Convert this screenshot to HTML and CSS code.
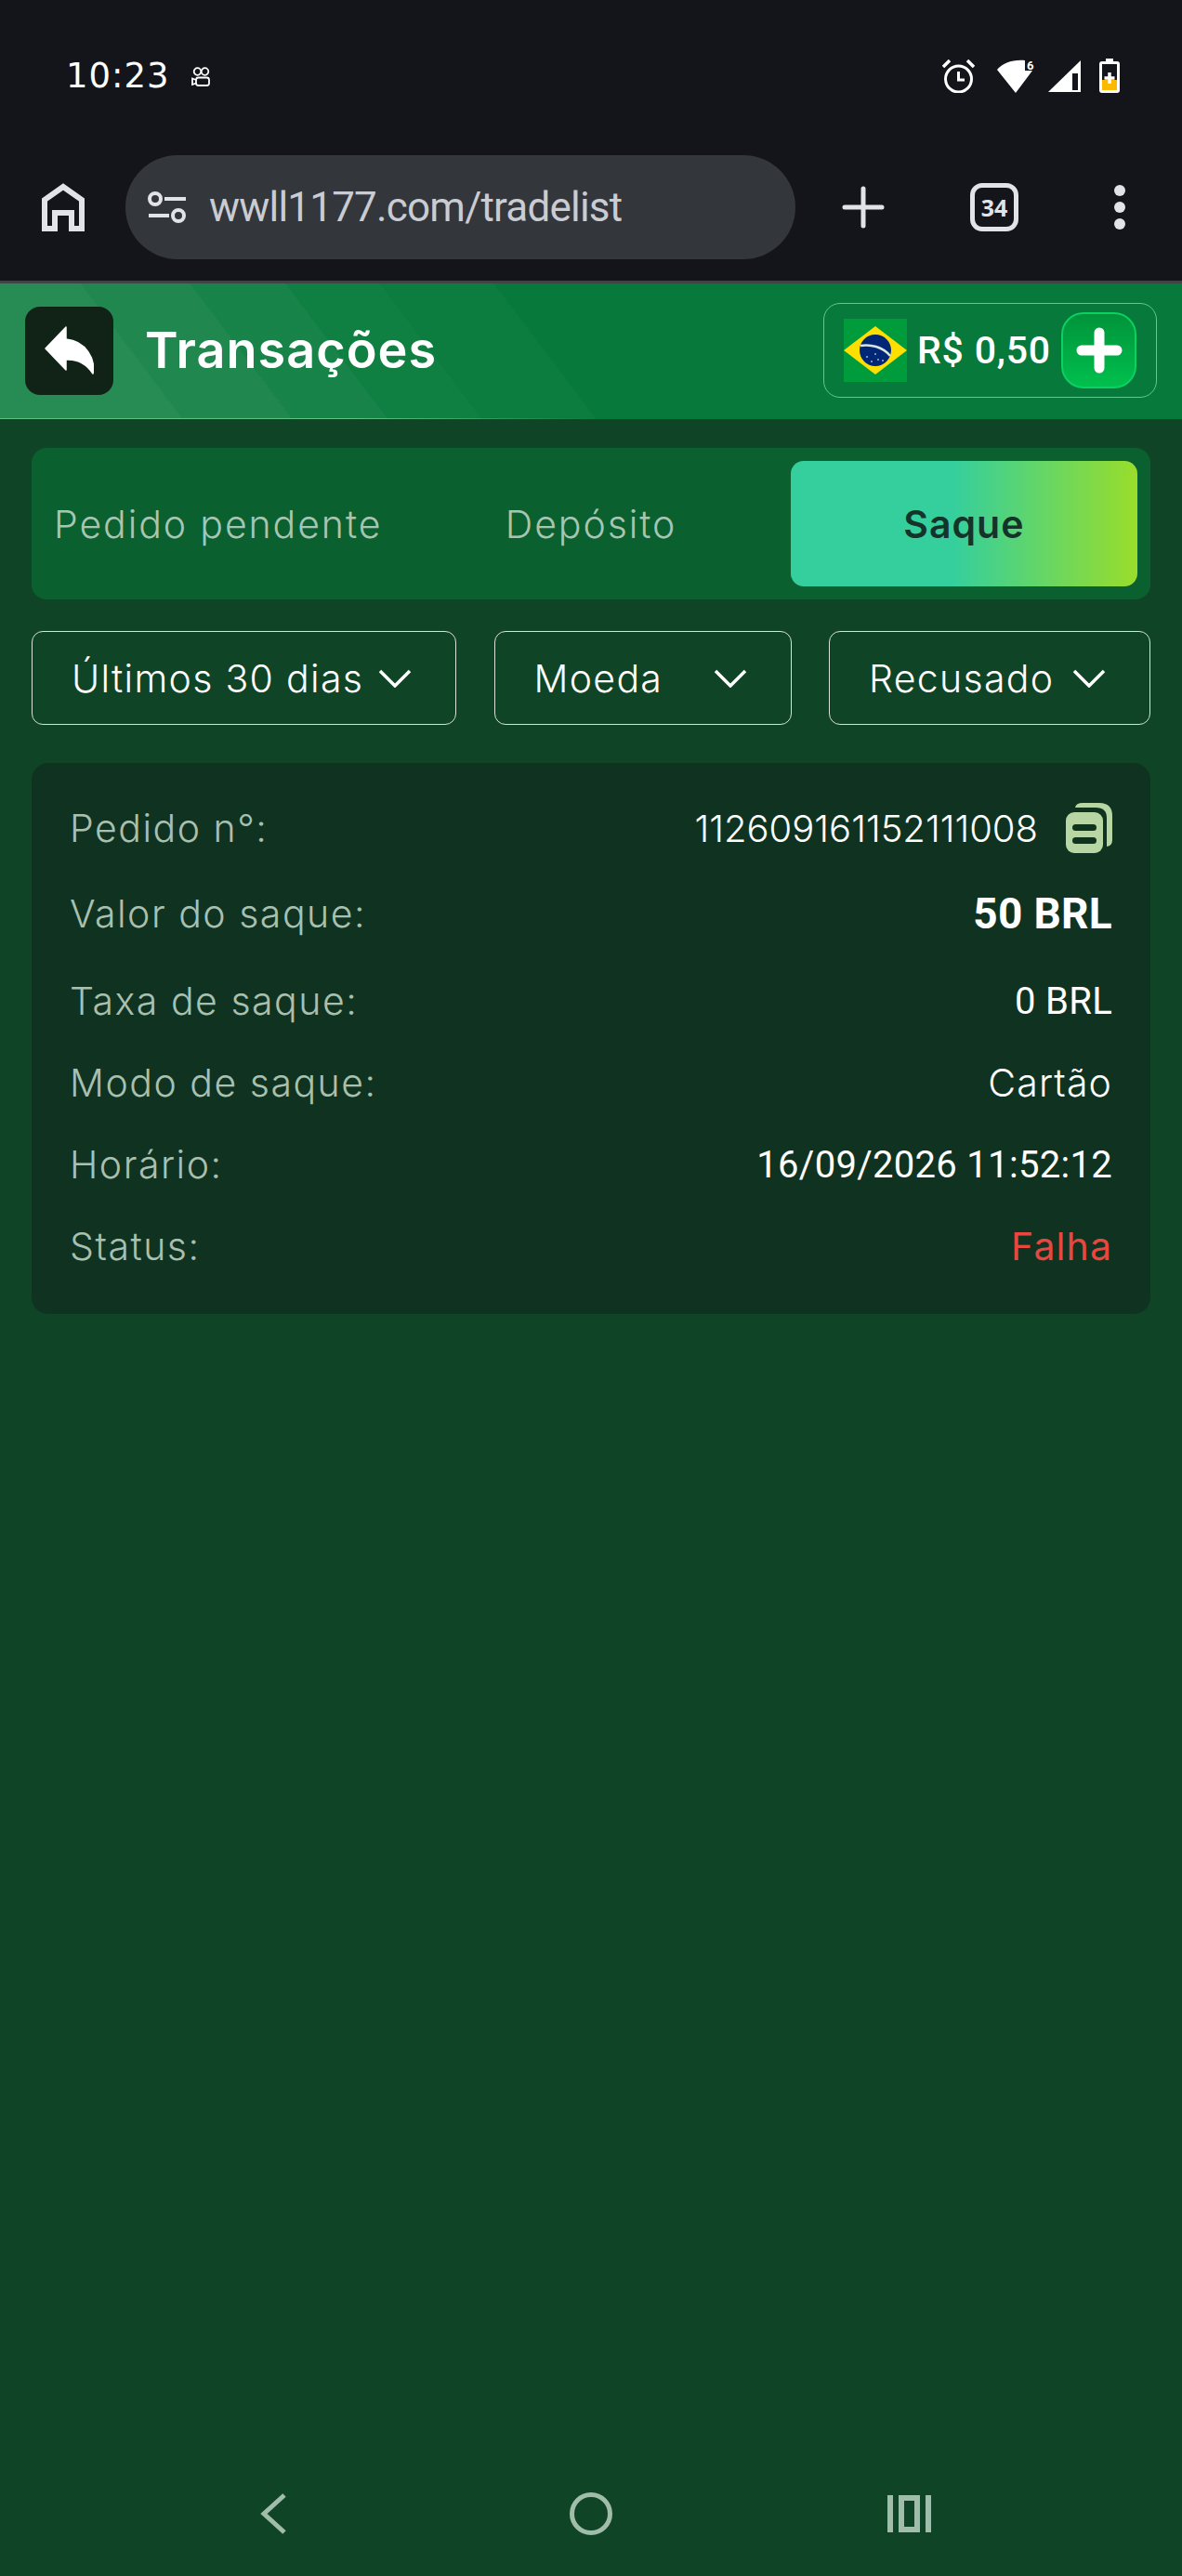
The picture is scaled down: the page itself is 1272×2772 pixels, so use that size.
FILE: index.html
```html
<!DOCTYPE html>
<html lang="pt-BR">
<head>
    <meta charset="UTF-8">
    <meta name="viewport" content="width=device-width, initial-scale=1.0">
    <title>Transações</title>
    <link rel="stylesheet" href="styles.css">
</head>
<body>
    <div class="browser-top">
        <div class="status-bar">
            <span class="status-time">10:23</span>
            <svg class="rec-icon" viewBox="0 0 20 21" fill="none" stroke="#fff" stroke-width="1.800">
                <circle cx="6.500" cy="5" r="3.800"/>
                <circle cx="14.500" cy="5" r="3.800"/>
                <rect x="5" y="11.500" width="14" height="8.500" rx="2.500"/>
                <path d="M5 14 L1 12.500 V19 L5 17.500"/>
            </svg>
            <div class="status-icons">
                <svg width="35" height="36" viewBox="0 0 35 36" fill="none" stroke="#fff">
                    <circle cx="17.500" cy="21" r="14" stroke-width="3"/>
                    <path d="M17.500 13 V22 H24" stroke-width="3"/>
                    <path d="M1 8 L8 1 M34 8 L27 1" stroke-width="3.500"/>
                </svg>
                <svg class="icon-wifi" width="41" height="36" viewBox="0 0 41 36" fill="#fff">
                    <path d="M0 11 C6 4 16 0 30 1 V12 H38 L20 36 Z"/>
                    <text x="32" y="11" class="wifi-six">6</text>
                </svg>
                <svg width="35" height="36" viewBox="0 0 35 36">
                    <path d="M0 35 L35 1 V35 Z" fill="#fff"/>
                    <rect x="26" y="15" width="6" height="18" fill="#13151a"/>
                </svg>
                <svg class="icon-battery" width="22" height="37" viewBox="0 0 22 37">
                    <path d="M7 0 H15 V3 H19 Q22 3 22 6 V34 Q22 37 19 37 H3 Q0 37 0 34 V6 Q0 3 3 3 H7 Z" fill="#fff"/>
                    <rect x="3" y="6" width="16" height="13" fill="#13151a"/>
                    <rect x="3" y="23" width="16" height="11" fill="#fdb900"/>
                    <rect x="3" y="19" width="16" height="4" fill="#13151a"/>
                    <path d="M11 15 V27 M5.500 21 H16.500" stroke="#fff" stroke-width="3.500"/>
                </svg>
            </div>
        </div>
        <div class="toolbar">
            <div class="tool-cell">
                <svg width="46" height="52" viewBox="0 0 46 52" fill="none" stroke="#e1e3e9" stroke-width="6">
                    <path d="M3 49 V18 L23 4 L43 18 V49 H32 V32 H14 V49 Z"/>
                </svg>
            </div>
            <div class="url-pill">
                <svg width="42" height="36" viewBox="0 0 42 36" fill="none" stroke="#e1e3e9" stroke-width="4">
                    <circle cx="8" cy="9" r="6"/>
                    <circle cx="33" cy="27" r="6"/>
                    <path d="M18 9 H41 M1 27 H23"/>
                </svg>
                <span class="url-text">wwll1177.com/tradelist</span>
            </div>
            <div class="tool-cell">
                <svg width="46" height="46" viewBox="0 0 46 46" stroke="#e1e3e9" stroke-width="5" stroke-linecap="round">
                    <path d="M23 3 V43 M3 23 H43"/>
                </svg>
            </div>
            <div class="tool-cell">
                <div class="tab-count">34</div>
            </div>
            <div class="tool-cell tool-dots">
                <span></span><span></span><span></span>
            </div>
        </div>
    </div>

    <header class="page-header">
        <button class="back-button">
            <svg width="53" height="52" viewBox="0 0 53 52" fill="#fff" stroke="#fff" stroke-width="1.500" stroke-linejoin="round">
                <path d="M23 1 L1 24 L23 47 V36 C36 35 46 42 52 51 C55 36 45 16 23 14 Z"/>
            </svg>
        </button>
        <h1 class="page-title">Transações</h1>
        <div class="balance">
            <svg class="flag" width="68" height="68" viewBox="0 0 68 68">
                <rect width="68" height="68" fill="#009b3a"/>
                <path d="M0 34 L34 8 L68 34 L34 60 Z" fill="#fedf00"/>
                <circle cx="34" cy="34" r="17" fill="#002776"/>
                <path d="M18 29 C28 27 42 30 50 40" fill="none" stroke="#d8e4e0" stroke-width="2.500"/>
                <g fill="#9fb4d8">
                    <circle cx="25" cy="41" r="1"/>
                    <circle cx="34" cy="38" r="1"/>
                    <circle cx="37" cy="44" r="1"/>
                    <circle cx="30" cy="46" r="1"/>
                    <circle cx="42" cy="45" r="1"/>
                </g>
            </svg>
            <span class="balance-value">R$ 0,50</span>
            <button class="deposit-button">
                <svg width="50" height="50" viewBox="0 0 50 50" stroke="#fff" stroke-width="11" stroke-linecap="round">
                    <path d="M25 6 V44 M6 25 H44"/>
                </svg>
            </button>
        </div>
    </header>

    <main class="content">
        <div class="tabs">
            <div class="tab">Pedido pendente</div>
            <div class="tab">Depósito</div>
            <div class="tab tab-active">Saque</div>
        </div>

        <div class="filters">
            <div class="filter">
                <span>Últimos 30 dias</span>
                <svg class="chevron" viewBox="0 0 36 20" fill="none" stroke="#fff" stroke-width="3.500"><path d="M2 2 L18 18 L34 2"/></svg>
            </div>
            <div class="filter">
                <span>Moeda</span>
                <svg class="chevron" viewBox="0 0 36 20" fill="none" stroke="#fff" stroke-width="3.500"><path d="M2 2 L18 18 L34 2"/></svg>
            </div>
            <div class="filter">
                <span>Recusado</span>
                <svg class="chevron" viewBox="0 0 36 20" fill="none" stroke="#fff" stroke-width="3.500"><path d="M2 2 L18 18 L34 2"/></svg>
            </div>
        </div>

        <section class="card">
            <div class="row row-order">
                <span class="label">Pedido n°:</span>
                <span class="value value-order">
                    112609161152111008
                    <svg class="copy-icon" width="50" height="54" viewBox="0 0 50 54" fill="#b8d6a4">
                        <path d="M10 5 Q11 0 18 0 H36 Q50 0 50 14 V40 Q50 46 44 47 V16 Q44 5 32 5 Z"/>
                        <rect x="0" y="10" width="40" height="44" rx="9"/>
                        <rect x="7" y="23" width="26" height="7" rx="3.500" fill="#103321"/>
                        <rect x="7" y="37" width="26" height="7" rx="3.500" fill="#103321"/>
                    </svg>
                </span>
            </div>
            <div class="row row-amount">
                <span class="label">Valor do saque:</span>
                <span class="value value-amount">50 BRL</span>
            </div>
            <div class="row">
                <span class="label">Taxa de saque:</span>
                <span class="value">0 BRL</span>
            </div>
            <div class="row">
                <span class="label">Modo de saque:</span>
                <span class="value value-text">Cartão</span>
            </div>
            <div class="row">
                <span class="label">Horário:</span>
                <span class="value">16/09/2026 11:52:12</span>
            </div>
            <div class="row">
                <span class="label">Status:</span>
                <span class="value value-text value-fail">Falha</span>
            </div>
        </section>
    </main>

    <nav class="nav-bar">
        <svg width="28" height="44" viewBox="0 0 28 44" fill="none" stroke="#a0bcaa" stroke-width="5"><path d="M26 2 L4 22 L26 42"/></svg>
        <svg width="46" height="46" viewBox="0 0 46 46" fill="none" stroke="#a0bcaa" stroke-width="5"><circle cx="23" cy="23" r="20.500"/></svg>
        <svg width="47" height="40" viewBox="0 0 47 40" fill="#a0bcaa">
            <rect width="6" height="40"/>
            <path d="M12 0 H35 V40 H12 Z M18 6 V34 H29 V6 Z" fill-rule="evenodd"/>
            <rect x="41" width="6" height="40"/>
        </svg>
    </nav>
</body>
</html>
```

FILE: styles.css
```css
* {
    box-sizing: border-box;
}

body {
    margin: 0;
    width: 1272px;
    height: 2772px;
    display: flex;
    flex-direction: column;
    background-color: #0f4526;
    color: white;
    font-family: Inter, "Noto Sans", sans-serif;
}

svg {
    display: block;
}

/* barra do navegador */
.browser-top {
    height: 305px;
    background: #13151a;
    border-bottom: 3px solid #3f4246;
}

.status-bar {
    height: 144px;
    padding: 63px 67px 0 71px;
    display: flex;
    align-items: flex-start;
}

.status-time {
    font-family: "DejaVu Sans", sans-serif;
    font-size: 37px;
    line-height: 38px;
    letter-spacing: 1px;
}

.rec-icon {
    width: 20px;
    height: 21px;
    margin: 9px 0 0 23px;
}

.status-icons {
    margin-left: auto;
    display: flex;
    gap: 14px;
    align-items: center;
}

.icon-wifi {
    margin-left: 10px;
}

.icon-battery {
    margin-left: 6px;
}

.wifi-six {
    font-family: Roboto, sans-serif;
    font-size: 13px;
    font-weight: 700;
}

.toolbar {
    display: grid;
    grid-template-columns: 135px 721px 146px 136px 134px;
    height: 112px;
    margin-top: 23px;
}

.tool-cell {
    display: flex;
    align-items: center;
    justify-content: center;
}

.url-pill {
    background: #33363b;
    border-radius: 56px;
    display: flex;
    align-items: center;
    padding-left: 24px;
    gap: 24px;
}

.url-text {
    font-family: Roboto, sans-serif;
    font-size: 44px;
    letter-spacing: -0.8px;
    color: #c9ccd2;
}

.tab-count {
    width: 52px;
    height: 52px;
    border: 5px solid #e1e3e9;
    border-radius: 13px;
    display: flex;
    align-items: center;
    justify-content: center;
    font-family: "Open Sans", sans-serif;
    font-size: 25px;
    font-weight: 700;
    color: #e1e3e9;
}

.tool-dots {
    flex-direction: column;
    gap: 6px;
}

.tool-dots span {
    width: 12px;
    height: 12px;
    border-radius: 50%;
    background: #e1e3e9;
}

/* cabecalho */
.page-header {
    height: 146px;
    padding: 0 27px 2px;
    display: flex;
    align-items: center;
    background:
        linear-gradient(90deg, #5dc47f 30%, transparent 50%) 0 100% / 100% 1px no-repeat,
        linear-gradient(53deg,
            rgba(255, 255, 255, 0.13) 157px,
            rgba(255, 255, 255, 0.1) 157px 251px,
            rgba(255, 255, 255, 0.07) 251px 333px,
            rgba(255, 255, 255, 0.04) 333px 414px,
            rgba(255, 255, 255, 0.02) 414px 512px,
            transparent 512px),
        #077a3b;
}

.back-button {
    width: 95px;
    height: 95px;
    padding: 0;
    border: none;
    border-radius: 16px;
    background: #102316;
    display: flex;
    align-items: center;
    justify-content: center;
}

.page-title {
    margin: 0 0 2px 34px;
    font-size: 54px;
    font-weight: 600;
    letter-spacing: 1px;
}

.balance {
    margin-left: auto;
    width: 359px;
    height: 102px;
    padding: 0 21px;
    border: 1px solid #62c98a;
    border-radius: 18px;
    display: flex;
    align-items: center;
}

.balance-value {
    margin-left: 11px;
    font-family: Roboto, sans-serif;
    font-size: 41px;
    font-weight: 500;
    letter-spacing: 0.8px;
    white-space: nowrap;
}

.deposit-button {
    margin-left: auto;
    width: 81px;
    height: 82px;
    padding: 0;
    border: 2px solid #0bd062;
    border-radius: 24px;
    background: linear-gradient(#00933a, #00c04e);
    display: flex;
    align-items: center;
    justify-content: center;
}

/* conteudo */
.content {
    flex: 1;
    padding: 31px 34px 0;
}

.tabs {
    height: 163px;
    display: grid;
    grid-template-columns: repeat(3, 1fr);
    border-radius: 16px;
    background: #0b6030;
}

.tab {
    display: flex;
    align-items: center;
    justify-content: center;
    font-size: 41px;
    font-weight: 300;
    letter-spacing: 1.9px;
    color: #a6c6b3;
}

.tab-active {
    margin: 14px;
    border-radius: 14px;
    background: linear-gradient(90deg, #35cf9d 47%, #99dd2b 100%);
    color: #14342a;
    font-weight: 600;
    letter-spacing: 1px;
}

.filters {
    margin-top: 34px;
    display: grid;
    grid-template-columns: 457px 320px 346px;
    justify-content: space-between;
}

.filter {
    height: 101px;
    padding: 0 47px 0 42px;
    border: 1px solid #d6e2da;
    border-radius: 12px;
    display: flex;
    align-items: center;
    justify-content: space-between;
    font-size: 41px;
    font-weight: 300;
    letter-spacing: 1.3px;
    white-space: nowrap;
}

.chevron {
    width: 36px;
    height: 20px;
    flex: none;
}

.card {
    margin-top: 41px;
    padding: 28px 41px 29px;
    border-radius: 18px;
    background: #103321;
}

.row {
    height: 88px;
    display: flex;
    align-items: center;
    justify-content: space-between;
}

.row-order {
    height: 84px;
}

.row-amount {
    height: 100px;
}

.label {
    font-size: 41px;
    font-weight: 300;
    letter-spacing: 1.5px;
    color: #a9c0b0;
}

.value {
    font-family: Roboto, sans-serif;
    font-size: 40px;
    letter-spacing: 0.3px;
}

.value-order {
    display: flex;
    align-items: center;
    gap: 30px;
    font-family: Inter, sans-serif;
    font-weight: 300;
    letter-spacing: 0;
}

.value-amount {
    font-size: 46px;
    font-weight: 700;
}

.value-text {
    font-family: Inter, sans-serif;
    font-size: 41px;
    font-weight: 300;
    letter-spacing: 1.1px;
}

.value-fail {
    color: #e8473f;
    font-weight: 400;
}

.nav-bar {
    height: 90px;
    margin-bottom: 22px;
    display: grid;
    grid-template-columns: repeat(3, 342px);
    justify-content: center;
    justify-items: center;
    align-items: center;
}
```
